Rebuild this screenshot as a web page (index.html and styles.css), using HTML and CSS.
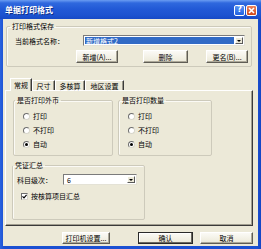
FILE: index.html
```html
<!DOCTYPE html>
<html>
<head>
<meta charset="utf-8">
<link rel="stylesheet" href="styles.css">
</head>
<body>
<div class="window">
  <div class="titlebar">
    <span class="title">单据打印格式</span>
    <div class="caption-btns">
      <span class="cbtn help">?</span>
      <span class="cbtn close"><svg width="7" height="7" viewBox="0 0 7 7"><path d="M1 1L6 6M6 1L1 6" stroke="#fff" stroke-width="1.6"/></svg></span>
    </div>
  </div>
  <div class="client">
    <fieldset class="grp grp-save">
      <legend>打印格式保存</legend>
      <div class="save-body">
        <div class="name-row">
          <span class="lbl lbl-name">当前格式名称：</span>
          <div class="combo combo-wide"><span class="sel">新增格式2</span><span class="arrow"><i class="tri"></i></span></div>
        </div>
        <div class="btn-row">
          <button class="btn b-new">新增(A)...</button>
          <button class="btn b-del">删除</button>
          <button class="btn b-ren">更名(B)...</button>
        </div>
      </div>
    </fieldset>

    <div class="tabs">
      <span class="tab active t1">常规</span>
      <span class="tab t2">尺寸</span>
      <span class="tab t3">多核算</span>
      <span class="tab t4">地区设置</span>
    </div>

    <div class="panel">
      <div class="panel-top">
        <fieldset class="grp grp-fc">
          <legend>是否打印外币</legend>
          <div class="radios">
            <label class="radio"><i class="rb"></i>打印</label>
            <label class="radio"><i class="rb"></i>不打印</label>
            <label class="radio"><i class="rb on"></i>自动</label>
          </div>
        </fieldset>
        <fieldset class="grp grp-qty">
          <legend>是否打印数量</legend>
          <div class="radios">
            <label class="radio"><i class="rb"></i>打印</label>
            <label class="radio"><i class="rb"></i>不打印</label>
            <label class="radio"><i class="rb on"></i>自动</label>
          </div>
        </fieldset>
      </div>
      <fieldset class="grp grp-sum">
        <legend>凭证汇总</legend>
        <div class="sum-body">
          <div class="level-row">
            <span class="lbl lbl-level">科目级次：</span>
            <div class="combo combo-small"><span class="val">6</span><span class="arrow"><i class="tri"></i></span></div>
          </div>
          <label class="check-row"><span class="cb"><svg width="5" height="5" viewBox="0 0 5 5"><path d="M0.5 2.3L2 3.8L4.6 0.8" fill="none" stroke="#000" stroke-width="1.2"/></svg></span>按核算项目汇总</label>
        </div>
      </fieldset>
    </div>

    <div class="footer">
      <button class="btn b-printer">打印机设置...</button>
      <button class="btn b-ok">确认</button>
      <button class="btn b-cancel">取消</button>
    </div>
  </div>
</div>
</body>
</html>
```
FILE: styles.css
```css
* { box-sizing: border-box; margin: 0; padding: 0; }
html, body { width: 261px; height: 249px; overflow: hidden; background: #ffffff; }
body {
  font-family: "Noto Sans CJK SC", "Noto Sans", sans-serif;
  font-size: 7px;
  line-height: 8px;
  color: #000;
}
.window {
  width: 261px;
  height: 249px;
  display: flex;
  flex-direction: column;
  background: linear-gradient(to right, #2a63df, #1b50d2 4px, #1b50d2 257px, #1545c4);
}
.titlebar {
  height: 19px;
  flex: none;
  display: flex;
  align-items: center;
  padding: 0 4px 0 5px;
  background: linear-gradient(to bottom, #6a9cf2 0, #2f68de 3px, #2259d6 9px, #1d53d0 15px, #1749c6 19px);
}
.title {
  flex: 1;
  color: #fff;
  font-weight: bold;
  font-size: 8px;
  line-height: 9px;
  text-shadow: 1px 1px 0 #0f2f8a;
}
.caption-btns { display: flex; gap: 1px; margin-top: 1px; }
.cbtn {
  width: 11px;
  height: 11px;
  border: 1px solid #fff;
  border-radius: 2px;
  display: flex;
  align-items: center;
  justify-content: center;
  color: #fff;
  font: bold 8px/8px "DejaVu Sans", sans-serif;
}
.help { background: linear-gradient(#5a95f5, #2160e0); }
.close { background: linear-gradient(#ec845c, #d0461a); }

.client {
  flex: 1;
  margin: 0 3px 3px;
  background: #ECE9D8;
  padding: 3px 0 0 2px;
  display: flex;
  flex-direction: column;
}

.grp {
  border: 1px solid #cdcabb;
  border-radius: 2px;
  min-width: 0;
  padding: 0;
  box-shadow: 1px 1px 0 #fbfaf5 inset;
}
.grp legend {
  padding: 0 2px;
  font-size: 7px;
  line-height: 8px;
}
.grp-save { margin-left: 1px; width: 246px; height: 45px; }
.grp-save legend { margin-left: 3px; }
.save-body { padding: 5px 0 0 8px; display: flex; flex-direction: column; gap: 4px; }
.name-row { display: flex; align-items: center; height: 11px; }
.lbl-name { width: 68px; }
.btn-row { display: flex; height: 13px; }

.combo {
  height: 11px;
  background: #fff;
  border: 1px solid;
  border-color: #7b7b7b #e4e2d6 #e4e2d6 #7b7b7b;
  display: flex;
  align-items: stretch;
  padding: 1px;
  gap: 1px;
}
.combo-wide { width: 162px; }
.sel {
  flex: 1;
  background: #316AC5;
  color: #fff;
  padding-left: 1px;
  display: flex;
  align-items: center;
}
.val { flex: 1; padding-left: 2px; display: flex; align-items: center; }
.arrow {
  width: 8px;
  background: #ECE9D8;
  border: 1px solid;
  border-color: #fff #5a5a5a #5a5a5a #fff;
  display: flex;
  align-items: center;
  justify-content: center;
}
.tri {
  width: 0;
  height: 0;
  border-left: 2px solid transparent;
  border-right: 2px solid transparent;
  border-top: 2px solid #000;
}

.btn {
  font: inherit;
  font-size: 7px;
  line-height: 8px;
  color: #000;
  background: linear-gradient(#fbfaf6, #ECE9D8);
  border: 1px solid;
  border-color: #ffffff #5f5d55 #5f5d55 #ffffff;
  box-shadow: inset -1px -1px 0 #aca899;
  display: flex;
  align-items: center;
  justify-content: center;
  padding: 0;
  height: 13px;
}
.b-new { margin-left: 61px; width: 42px; }
.b-del { margin-left: 25px; width: 45px; }
.b-ren { margin-left: 18px; width: 42px; }

.tabs {
  display: flex;
  align-items: flex-end;
  height: 12px;
  margin-top: 11px;
  padding-left: 5px;
  position: relative;
  z-index: 1;
}
.tab {
  height: 10px;
  border: 1px solid;
  border-bottom: none;
  border-color: #fff #3a3a3a transparent #fff;
  box-shadow: inset -1px 0 0 #9a978a;
  display: flex;
  align-items: center;
  justify-content: center;
  background: #ECE9D8;
}
.tab.active { height: 13px; margin-bottom: -1px; padding-bottom: 1px; }
.t1 { width: 22px; }
.t2 { width: 23px; }
.t3 { width: 30px; }
.t4 { width: 39px; }

.panel {
  width: 248px;
  height: 136px;
  border: 1px solid;
  border-color: #fff #3a3a3a #3a3a3a #fff;
  box-shadow: inset -1px -1px 0 #a19e90;
  background: #ECE9D8;
  padding: 5px 0 0 7px;
  display: flex;
  flex-direction: column;
}
.panel-top { display: flex; gap: 5px; }
.grp-fc { width: 100px; height: 60px; }
.grp-qty { width: 94px; height: 60px; }
.grp-fc legend, .grp-qty legend { margin-left: 1px; }
.radios { padding: 5px 0 0 9px; display: flex; flex-direction: column; }
.radio { height: 14px; display: flex; align-items: center; gap: 3px; }
.rb {
  width: 7px;
  height: 7px;
  border-radius: 50%;
  background: #fff;
  border: 1px solid #6e6e6e;
  border-right-color: #d8d6cb;
  border-bottom-color: #d8d6cb;
  display: flex;
  align-items: center;
  justify-content: center;
}
.rb.on::after {
  content: "";
  width: 3px;
  height: 3px;
  border-radius: 50%;
  background: #000;
}

.grp-sum { width: 133px; height: 59px; margin-top: 5px; margin-left: -1px; }
.grp-sum legend { margin-left: 0; }
.sum-body { padding: 5px 0 0 4px; display: flex; flex-direction: column; gap: 5px; }
.level-row { display: flex; align-items: center; height: 11px; }
.lbl-level { width: 46px; }
.combo-small { width: 74px; }
.check-row { height: 12px; display: flex; align-items: center; gap: 3px; padding-left: 4px; }
.cb {
  width: 7px;
  height: 7px;
  background: #fff;
  border: 1px solid #6e6e6e;
  border-right-color: #d8d6cb;
  border-bottom-color: #d8d6cb;
  display: flex;
  align-items: center;
  justify-content: center;
}

.footer { display: flex; margin-top: 6px; padding-left: 57px; }
.footer .btn { height: 12px; }
.b-printer { width: 48px; }
.b-ok { margin-left: 28px; width: 55px; border-color: #2a2a2a; box-shadow: inset -1px -1px 0 #6a685f, inset 1px 1px 0 #fff; }
.b-cancel { margin-left: 7px; width: 53px; }
```
